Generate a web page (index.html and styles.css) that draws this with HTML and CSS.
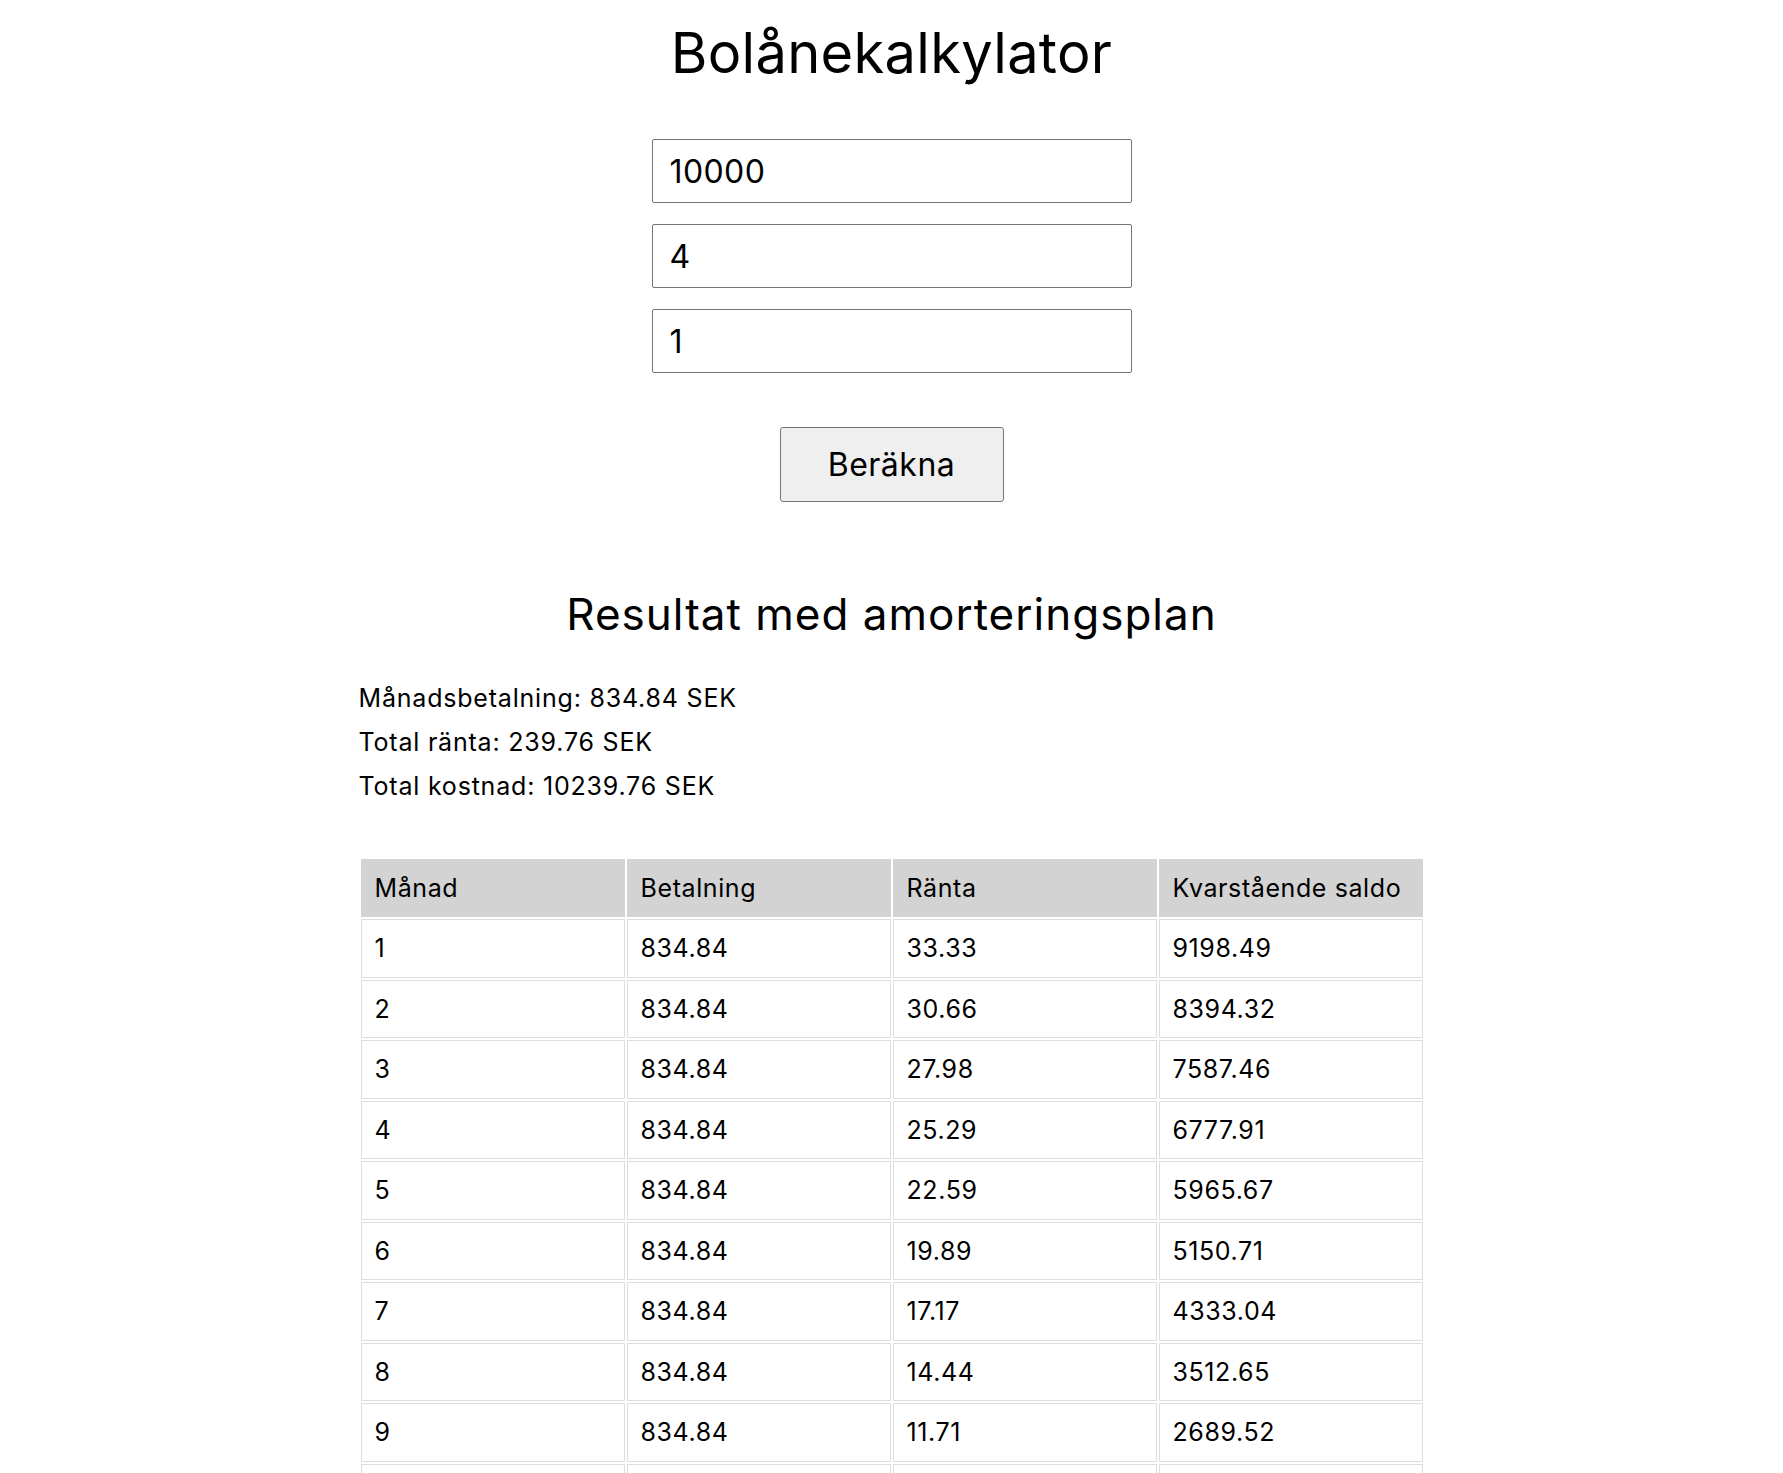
FILE: index.html
```html
<!DOCTYPE html>
<html lang="sv">
<head>
<meta charset="utf-8">
<title>Bolånekalkylator</title>
<link rel="stylesheet" href="styles.css">
</head>
<body>
<h1 class="title">Bolånekalkylator</h1>
<form class="calc">
  <input class="field" type="text" value="10000">
  <input class="field" type="text" value="4">
  <input class="field" type="text" value="1">
  <button class="calc-btn" type="button">Beräkna</button>
</form>
<section class="results">
  <h2 class="results-title">Resultat med amorteringsplan</h2>
  <div class="summary">
    <p class="summary-line">Månadsbetalning: 834.84 SEK</p>
    <p class="summary-line">Total ränta: 239.76 SEK</p>
    <p class="summary-line">Total kostnad: 10239.76 SEK</p>
  </div>
  <table class="plan">
    <thead>
      <tr><th>Månad</th><th>Betalning</th><th>Ränta</th><th>Kvarstående saldo</th></tr>
    </thead>
    <tbody>
      <tr><td>1</td><td>834.84</td><td>33.33</td><td>9198.49</td></tr>
      <tr><td>2</td><td>834.84</td><td>30.66</td><td>8394.32</td></tr>
      <tr><td>3</td><td>834.84</td><td>27.98</td><td>7587.46</td></tr>
      <tr><td>4</td><td>834.84</td><td>25.29</td><td>6777.91</td></tr>
      <tr><td>5</td><td>834.84</td><td>22.59</td><td>5965.67</td></tr>
      <tr><td>6</td><td>834.84</td><td>19.89</td><td>5150.71</td></tr>
      <tr><td>7</td><td>834.84</td><td>17.17</td><td>4333.04</td></tr>
      <tr><td>8</td><td>834.84</td><td>14.44</td><td>3512.65</td></tr>
      <tr><td>9</td><td>834.84</td><td>11.71</td><td>2689.52</td></tr>
      <tr><td>10</td><td>834.84</td><td>8.96</td><td>1863.64</td></tr>
      <tr><td>11</td><td>834.84</td><td>6.21</td><td>1035.01</td></tr>
      <tr><td>12</td><td>834.84</td><td>3.45</td><td>203.62</td></tr>
    </tbody>
  </table>
</section>
</body>
</html>
```

FILE: styles.css
```css
html, body {
  margin: 0;
  padding: 0;
  background: #fff;
}
body {
  font-family: Inter, "Noto Sans", sans-serif;
  color: #000;
}
.title {
  margin: 20px 0 0;
  font-size: 56px;
  line-height: 66px;
  font-weight: 400;
  letter-spacing: 0.3px;
  text-align: center;
}
.calc {
  display: flex;
  flex-direction: column;
  align-items: center;
  gap: 21px;
  margin-top: 53px;
}
.field {
  box-sizing: border-box;
  width: 480px;
  height: 64px;
  margin: 0;
  padding: 0 17px;
  border: 1px solid #767676;
  border-radius: 2px;
  font-family: inherit;
  font-size: 32px;
  letter-spacing: 0.4px;
  color: #000;
  background: #fff;
}
.calc-btn {
  box-sizing: border-box;
  width: 224px;
  height: 75px;
  margin-top: 33px;
  border: 1px solid #767676;
  border-radius: 3px;
  background: #efefef;
  font-family: inherit;
  font-size: 32px;
  letter-spacing: 0.5px;
  color: #000;
}
.results {
  width: 1066px;
  margin: 0 auto;
}
.results-title {
  margin: 88px 0 0;
  font-size: 44px;
  line-height: 48px;
  font-weight: 400;
  letter-spacing: 1px;
  text-align: center;
}
.summary {
  margin-top: 38px;
}
.summary-line {
  margin: 0;
  font-size: 25px;
  line-height: 44px;
  letter-spacing: 0.8px;
}
.plan {
  width: 100%;
  margin-top: 49px;
  table-layout: fixed;
  border-collapse: separate;
  border-spacing: 2px;
  font-size: 25px;
  letter-spacing: 0.6px;
}
.plan th,
.plan td {
  height: 56.5px;
  padding: 0 13px;
  text-align: left;
  font-weight: 400;
  border: 1px solid #ddd;
}
.plan th {
  height: 56px;
  background: #d3d3d3;
  border-color: #d3d3d3;
}
```
